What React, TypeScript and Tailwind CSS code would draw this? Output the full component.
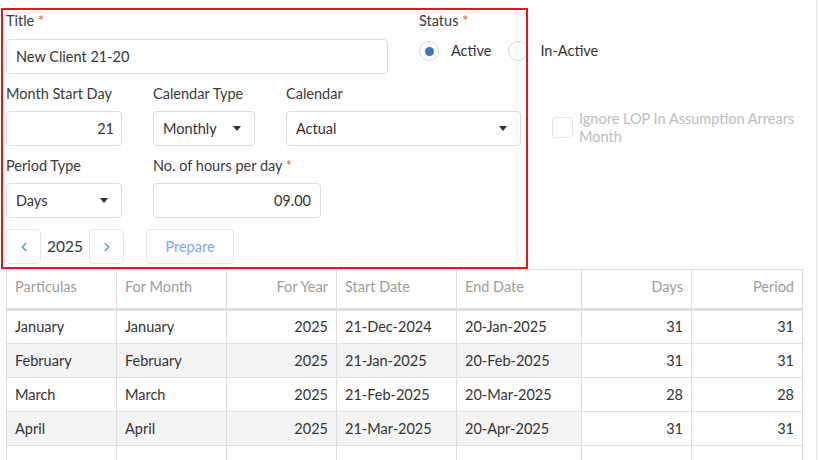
import { ChevronLeft, ChevronRight } from 'lucide-react'

const rows = [
  { p: 'January', m: 'January', y: '2025', s: '21-Dec-2024', e: '20-Jan-2025', d: '31', per: '31' },
  { p: 'February', m: 'February', y: '2025', s: '21-Jan-2025', e: '20-Feb-2025', d: '31', per: '31' },
  { p: 'March', m: 'March', y: '2025', s: '21-Feb-2025', e: '20-Mar-2025', d: '28', per: '28' },
  { p: 'April', m: 'April', y: '2025', s: '21-Mar-2025', e: '20-Apr-2025', d: '31', per: '31' },
  { p: '', m: '', y: '', s: '', e: '', d: '', per: '' },
]

function Label({ children, req }: { children: React.ReactNode; req?: boolean }) {
  return (
    <div className="h-5 leading-5 text-[14.5px] text-[#3a3a3a]">
      {children}
      {req && <span className="text-[#e0575b]"> *</span>}
    </div>
  )
}

function Caret() {
  return <span className="ml-auto h-0 w-0 border-x-[4px] border-t-[5px] border-x-transparent border-t-[#2f2f2f]" />
}

export default function App() {
  return (
    <div className="relative w-[819px] h-[460px] overflow-hidden bg-white text-[#333]" style={{ fontFamily: 'Lato, "Open Sans", sans-serif' }}>
      {/* card */}
      <div className="-mt-[8px] w-[817px] h-[480px] border-t border-r border-[#e4e4e4] rounded-tr-[10px] pl-[6px] pt-[18px]">

        {/* form */}
        <div className="flex h-[63px]">
          <div className="w-[382px] flex flex-col gap-2">
            <Label req>Title</Label>
            <div className="h-[35px] w-[382px] border border-[#dcdcdc] rounded-[4px] flex items-center px-[9px] text-[14.5px]">
              New Client 21-20
            </div>
          </div>
          <div className="ml-[31px] flex flex-col gap-[10px]">
            <Label req>Status</Label>
            <div className="flex items-center h-5 text-[14.5px]">
              <span className="w-5 h-5 rounded-full border border-[#d8d8d8] flex items-center justify-center">
                <span className="w-[9px] h-[9px] rounded-full bg-[#3a77bd]" />
              </span>
              <span className="ml-3">Active</span>
              <span className="ml-[17px] w-5 h-5 rounded-full border border-[#d8d8d8]" />
              <span className="ml-3">In-Active</span>
            </div>
          </div>
        </div>

        <div className="flex h-[62px] mt-[10px]">
          <div className="w-[147px] flex flex-col gap-[7px]">
            <Label>Month Start Day</Label>
            <div className="h-[35px] w-[116px] border border-[#dcdcdc] rounded-[4px] flex items-center justify-end px-[7px] text-[14.5px]">21</div>
          </div>
          <div className="w-[133px] flex flex-col gap-[7px]">
            <Label>Calendar Type</Label>
            <div className="h-[35px] w-[102px] border border-[#dcdcdc] rounded-[4px] flex items-center pl-[9px] pr-[13px] text-[14.5px]">
              Monthly<Caret />
            </div>
          </div>
          <div className="w-[266px] flex flex-col gap-[7px]">
            <Label>Calendar</Label>
            <div className="h-[35px] w-[235px] border border-[#dcdcdc] rounded-[4px] flex items-center pl-[9px] pr-[13px] text-[14.5px]">
              Actual<Caret />
            </div>
          </div>
          <div className="flex items-start pt-[26px]">
            <span className="mt-[7px] w-[21px] h-[21px] border border-[#e6e6e6] rounded-[3px] shrink-0" />
            <span className="ml-[6px] w-[230px] text-[14.5px] leading-[18px] text-[#bcbcbc]">Ignore LOP In Assumption Arrears Month</span>
          </div>
        </div>

        <div className="flex h-[62px] mt-[10px]">
          <div className="w-[147px] flex flex-col gap-[7px]">
            <Label>Period Type</Label>
            <div className="h-[35px] w-[116px] border border-[#dcdcdc] rounded-[4px] flex items-center pl-[9px] pr-[13px] text-[14.5px]">
              Days<Caret />
            </div>
          </div>
          <div className="flex flex-col gap-[7px]">
            <Label req>No. of hours per day</Label>
            <div className="h-[35px] w-[168px] border border-[#dcdcdc] rounded-[4px] flex items-center justify-end px-[9px] text-[14.5px]">09.00</div>
          </div>
        </div>

        <div className="flex items-center mt-[11px] h-[35px]">
          <button className="w-[35px] h-[35px] border border-[#e6e6e6] rounded-[4px] flex items-center justify-center text-[#5b8ff0]">
            <ChevronLeft size={14} strokeWidth={2.5} />
          </button>
          <span className="w-[48px] text-center text-[15.5px] text-[#333]">2025</span>
          <button className="w-[35px] h-[35px] border border-[#e6e6e6] rounded-[4px] flex items-center justify-center text-[#5b8ff0]">
            <ChevronRight size={14} strokeWidth={2.5} />
          </button>
          <button className="ml-[22px] w-[88px] h-[35px] border border-[#e6e6e6] rounded-[4px] text-[14.5px] text-[#7ea6f2]">
            Prepare
          </button>
        </div>

        {/* table */}
        <table className="mt-[5px] border-collapse text-[14.5px] table-fixed w-[796px]">
          <colgroup>
            <col className="w-[110px]" />
            <col className="w-[110px]" />
            <col className="w-[110px]" />
            <col className="w-[120px]" />
            <col className="w-[125px]" />
            <col className="w-[110px]" />
            <col className="w-[111px]" />
          </colgroup>
          <thead>
            <tr className="h-[40px] text-[#9c9c9c] border-b-[3px] border-[#dedede]">
              <th className="border border-[#dedede] font-normal text-left px-2 pb-[5px]">Particulas</th>
              <th className="border border-[#dedede] font-normal text-left px-2 pb-[5px]">For Month</th>
              <th className="border border-[#dedede] font-normal text-right px-2 pb-[5px]">For Year</th>
              <th className="border border-[#dedede] font-normal text-left px-2 pb-[5px]">Start Date</th>
              <th className="border border-[#dedede] font-normal text-left px-2 pb-[5px]">End Date</th>
              <th className="border border-[#dedede] font-normal text-right px-2 pb-[5px]">Days</th>
              <th className="border border-[#dedede] font-normal text-right px-2 pb-[5px]">Period</th>
            </tr>
          </thead>
          <tbody>
            {rows.map((r, i) => {
              const bg = i % 2 === 1 ? 'bg-[#f4f4f4]' : 'bg-white'
              return (
                <tr key={i} className="h-[34px] text-[#333]">
                  <td className={`border border-[#dedede] px-2 ${bg}`}>{r.p}</td>
                  <td className={`border border-[#dedede] px-2 ${bg}`}>{r.m}</td>
                  <td className={`border border-[#dedede] px-2 text-right ${bg}`}>{r.y}</td>
                  <td className={`border border-[#dedede] px-2 ${bg}`}>{r.s}</td>
                  <td className={`border border-[#dedede] px-2 ${bg}`}>{r.e}</td>
                  <td className="border border-[#dedede] px-2 text-right bg-white">{r.d}</td>
                  <td className="border border-[#dedede] px-2 text-right bg-white">{r.per}</td>
                </tr>
              )
            })}
          </tbody>
        </table>
      </div>

      {/* highlight box */}
      <div className="pointer-events-none absolute left-[1px] top-[8px] w-[527px] h-[261px] border-2 border-[#e3161f]" />
    </div>
  )
}
